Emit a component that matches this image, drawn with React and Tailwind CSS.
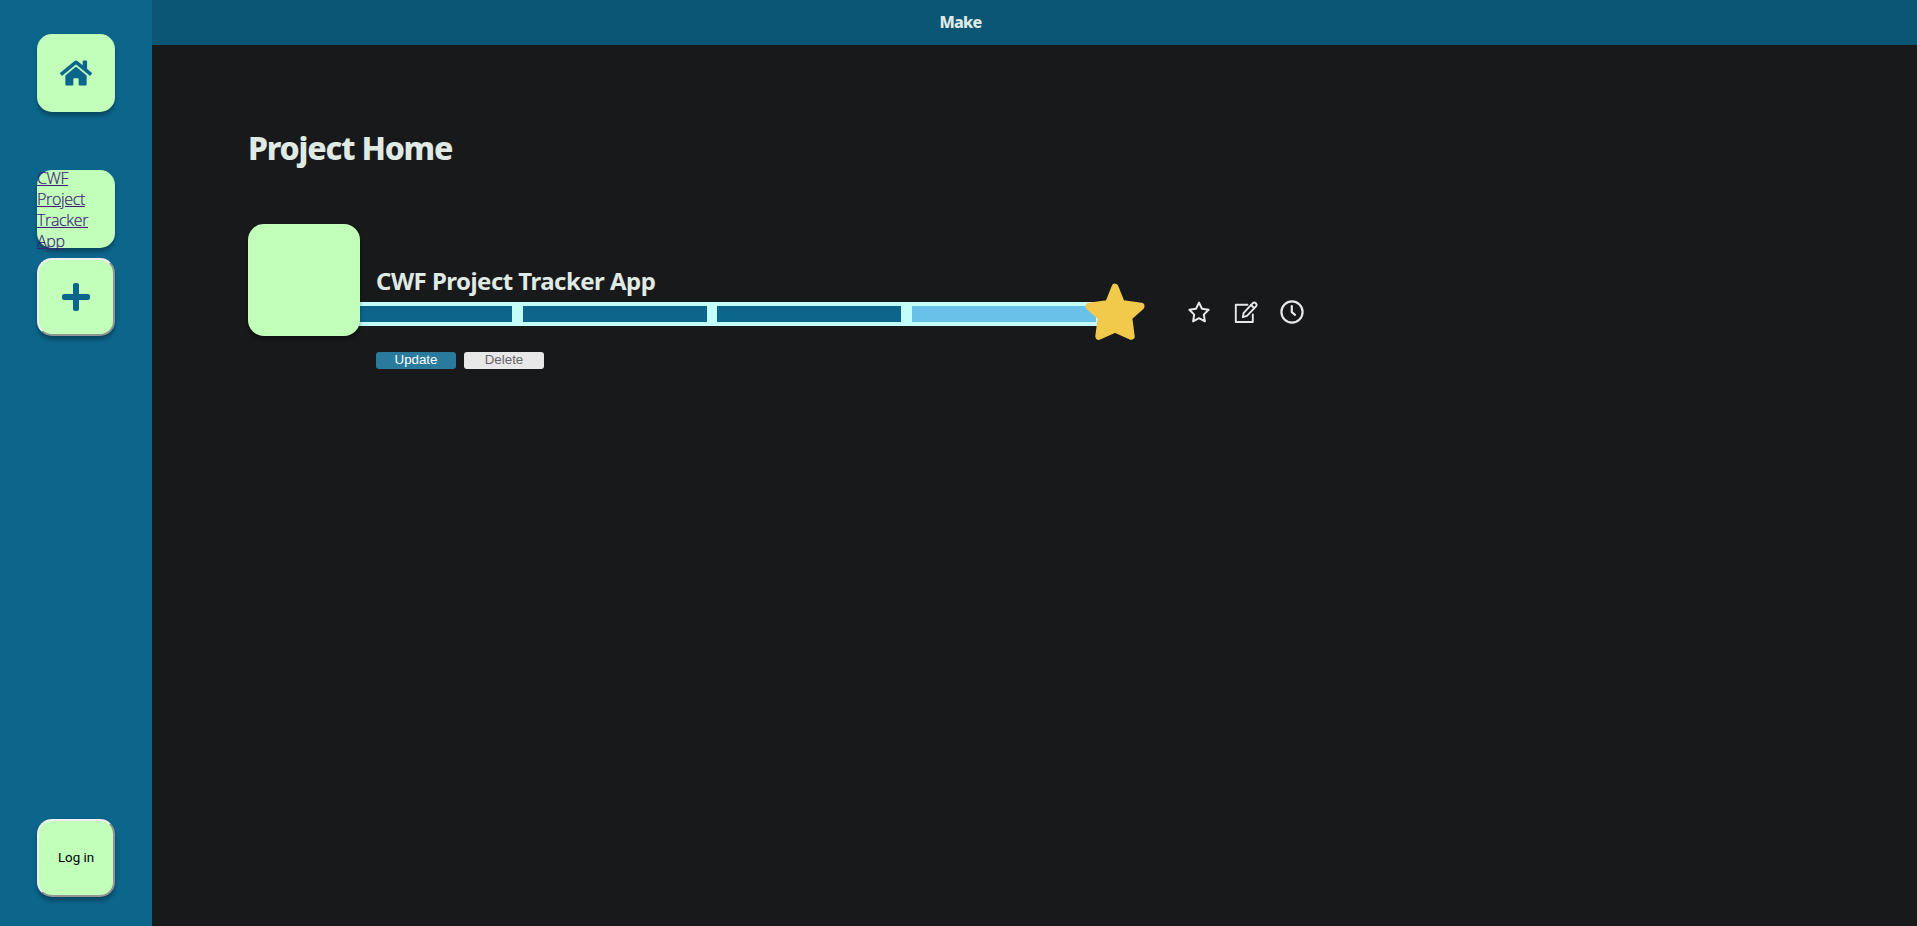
import { FaHome, FaPlus } from "react-icons/fa";

const tile = "h-[78px] w-[78px] shrink-0 rounded-[15px] bg-[#c1ffbb] shadow-[0_4px_4px_rgba(0,0,0,0.3)]";
const raised = "flex items-center justify-center border-2 border-solid border-t-[#efefef] border-l-[#efefef] border-r-[#949494] border-b-[#949494]";

function Segment({ color }) {
  return <div className={"h-4 w-[184px] shrink-0 " + color} />;
}

function StarIcon() {
  return (
    <svg viewBox="0 0 24 24" className="h-6 w-6 fill-none stroke-current stroke-2" strokeLinejoin="round">
      <path d="M12 2.6L15 8.8L21.6 9.8L16.8 14.6L17.9 21.3L12 18.2L6.1 21.3L7.2 14.6L2.4 9.8L9 8.8Z" />
    </svg>
  );
}

function EditIcon() {
  return (
    <svg viewBox="0 0 24 24" className="h-6 w-6 fill-none stroke-current" strokeWidth="1.9" strokeLinejoin="round" strokeLinecap="round">
      <path d="M13.5 4.8H1.8V22H18.8V14.5" />
      <path d="M8.8 17.2L9.7 12.8L18.8 3.2Q20.3 1.9 21.8 3.2Q23.4 4.7 22 6.3L13 15.8Z" />
      <path d="M17 5L20.2 8" />
    </svg>
  );
}

function ClockIcon() {
  return (
    <svg viewBox="0 0 24 24" className="h-6 w-6 fill-none stroke-current" strokeWidth="2.2" strokeLinejoin="round" strokeLinecap="round">
      <circle cx="12" cy="12" r="10.6" />
      <path d="M11.8 6V12.2L15 14.8" />
    </svg>
  );
}

export default function App() {
  return (
    <div className="flex h-[926px] w-full overflow-hidden bg-[#18191b] font-['Noto_Sans','Open_Sans',sans-serif] text-[#e0eae4]">
      <aside className="flex w-[152px] shrink-0 flex-col items-center bg-[#0c668c] pt-[34px] pb-[29px]">
        <a className={tile + " flex items-center justify-center text-[#0c668c]"}>
          <FaHome className="h-8 w-8" />
        </a>
        <a className={tile + " mt-[58px] text-[16px] leading-[21px] text-[#40207a] underline"}>
          <span className="-mt-[2px] block w-[60px] font-['Open_Sans','Noto_Sans',sans-serif] font-light tracking-[-0.35px] [-webkit-text-stroke:0.2px_#40207a]">CWF Project Tracker App</span>
        </a>
        <button className={tile + " " + raised + " mt-[12px] -translate-y-[2px] text-[#0c668c]"}>
          <FaPlus className="h-8 w-8" />
        </button>
        <button className={tile + " " + raised + " mt-auto font-[Roboto,sans-serif] text-[13.33px] text-black"}>
          Log in
        </button>
      </aside>
      <div className="flex min-w-0 flex-1 flex-col">
        <header className="flex h-[45px] shrink-0 items-center justify-center bg-[#0a5674] pr-[148px] pb-0.5 text-[16px] font-extrabold">
          <span className="tracking-[-0.7px]">Make</span>
        </header>
        <main className="flex flex-col pl-24">
          <h1 className="mt-[79px] h-[49px] text-[32px] leading-[48px] font-extrabold tracking-[-1.2px] whitespace-nowrap">Project Home</h1>
          <section className="mt-[51px] flex h-[145px]">
            <div className="z-10 h-28 w-28 shrink-0 rounded-[16px] bg-[#c1ffbb] shadow-[0_4px_4px_rgba(0,0,0,0.3)]" />
            <div className="flex flex-col">
              <h2 className="mt-[40px] h-[38px] pl-4 text-[24px] leading-[34px] font-bold tracking-[-0.53px] whitespace-nowrap">CWF Project Tracker App</h2>
              <div className="flex h-6 items-center">
                <div className="-ml-8 flex h-6 w-[770px] shrink-0 items-center gap-[10.6px] bg-[#c4fefb]">
                  <Segment color="bg-[#0c668c]" />
                  <Segment color="bg-[#0c668c]" />
                  <Segment color="bg-[#0c668c]" />
                  <Segment color="bg-[#67c1e8]" />
                </div>
                <svg viewBox="0 0 60 58" className="z-10 mb-1 -ml-[13px] h-[58px] w-[60px] shrink-0 fill-[#f1ca4c] stroke-[#f1ca4c]" strokeWidth="7" strokeLinejoin="round">
                  <path d="M30 4.2L36.5 20.5L56 23.3L43.7 34.5L46.2 53.3L30 46L13.8 53.3L16.3 34.5L4 23.3L23.5 20.5Z" />
                </svg>
                <div className="mb-1 ml-[42px] flex shrink-0 items-center gap-[22.5px] text-[#e8e8e8]">
                  <StarIcon />
                  <EditIcon />
                  <ClockIcon />
                </div>
              </div>
              <div className="mt-[26px] flex gap-2 pl-4 font-['Liberation_Sans',sans-serif] text-[13.33px] leading-[16px]">
                <button className="h-[17px] w-20 rounded-[3px] bg-[#297a9d] pb-px text-white">Update</button>
                <button className="h-[17px] w-20 rounded-[3px] bg-[#e8e8e8] pb-px text-[#666]">Delete</button>
              </div>
            </div>
          </section>
        </main>
      </div>
    </div>
  );
}
